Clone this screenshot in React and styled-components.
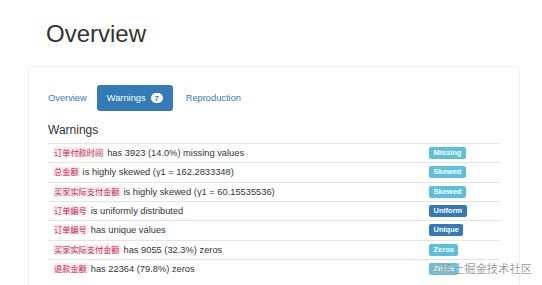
import React from "react";
import styled, { createGlobalStyle } from "styled-components";

const Global = createGlobalStyle`
  html, body { margin: 0; padding: 0; background: #fff; }
  body { font-family: "Liberation Sans", Arial, "Noto Sans CJK SC", sans-serif; color: #333; }
`;

const Page = styled.div`
  position: relative;
  width: 542px;
  height: 285px;
  overflow: hidden;
  padding: 21px 22px 0 28px;
  box-sizing: border-box;
`;

const Title = styled.h1`
  margin: 0 0 19px 18px;
  font-size: 24px;
  line-height: 26px;
  font-weight: 400;
  color: #333;
`;

const Panel = styled.div`
  border: 1px solid #efefef;
  border-radius: 4px;
  box-shadow: 0 1px 1px rgba(0, 0, 0, 0.03);
  padding: 18px 19px 20px 19px;
  height: 260px;
  box-sizing: border-box;
`;

const Tabs = styled.ul`
  display: flex;
  list-style: none;
  margin: 0 0 0 -10px;
  padding: 0;
`;

const Tab = styled.li`
  display: flex;
  align-items: center;
  height: 26px;
  padding: 0 10px;
  margin-right: ${(p) => (p.$active ? "3px" : "0")};
  border-radius: 3px;
  font-size: 9.3px;
  background: ${(p) => (p.$active ? "#337ab7" : "transparent")};
  color: ${(p) => (p.$active ? "#fff" : "#337ab7")};
`;

const Count = styled.span`
  display: inline-flex;
  align-items: center;
  justify-content: center;
  margin-left: 5px;
  width: 12px;
  height: 10px;
  border-radius: 6px;
  background: #fff;
  color: #337ab7;
  font-size: 7.5px;
  font-weight: 700;
`;

const Heading = styled.h2`
  margin: 12px 0 6px 0;
  font-size: 12px;
  line-height: 14px;
  font-weight: 400;
  color: #333;
`;

const Table = styled.table`
  width: 452px;
  border-collapse: collapse;
  font-size: 9.3px;
`;

const Cell = styled.td`
  border-top: 1px solid #e4e4e4;
  padding: 3px 5px 3.33px 5px;
  height: 12px;
  line-height: 12px;
  white-space: nowrap;
  width: ${(p) => p.$w || "auto"};
  color: #333;
`;

const Code = styled.code`
  display: inline-block;
  height: 10px;
  line-height: 10px;
  padding: 0 1px;
  margin: 0 3px 0 0;
  vertical-align: top;
  font-family: "Noto Sans CJK SC", sans-serif;
  font-size: 8.2px;
  color: #c7254e;
  background: #f9eef2;
  border-radius: 2px;
`;

const Badge = styled.span`
  display: inline-block;
  height: 12px;
  line-height: 12px;
  padding: 0 4.5px;
  vertical-align: top;
  border-radius: 2px;
  font-size: 7.5px;
  font-weight: 700;
  color: #fff;
  background: ${(p) => (p.$kind === "primary" ? "#337ab7" : "#5bc0de")};
`;

const Watermark = styled.div`
  position: absolute;
  right: 10px;
  bottom: 10px;
  font-family: "Noto Sans CJK SC", sans-serif;
  font-size: 11.3px;
  line-height: 14px;
  color: rgba(120, 120, 120, 0.75);
  text-shadow: 0 0 2px rgba(255, 255, 255, 0.9);
`;

const rows = [
  { col: "订单付款时间", text: "has 3923 (14.0%) missing values", badge: "Missing", kind: "info" },
  { col: "总金额", text: "is highly skewed (γ1 = 162.2833348)", badge: "Skewed", kind: "info" },
  { col: "买家实际支付金额", text: "is highly skewed (γ1 = 60.15535536)", badge: "Skewed", kind: "info" },
  { col: "订单编号", text: "is uniformly distributed", badge: "Uniform", kind: "primary" },
  { col: "订单编号", text: "has unique values", badge: "Unique", kind: "primary" },
  { col: "买家实际支付金额", text: "has 9055 (32.3%) zeros", badge: "Zeros", kind: "info" },
  { col: "退款金额", text: "has 22364 (79.8%) zeros", badge: "Zeros", kind: "info" },
];

export default function App() {
  return (
    <>
      <Global />
      <Page>
        <Title>Overview</Title>
        <Panel>
          <Tabs>
            <Tab>Overview</Tab>
            <Tab $active>
              Warnings <Count>7</Count>
            </Tab>
            <Tab>Reproduction</Tab>
          </Tabs>
          <Heading>Warnings</Heading>
          <Table>
            <tbody>
              {rows.map((r, i) => (
                <tr key={i}>
                  <Cell $w="366px">
                    <Code>{r.col}</Code>
                    {r.text}
                  </Cell>
                  <Cell>
                    <Badge $kind={r.kind}>{r.badge}</Badge>
                  </Cell>
                </tr>
              ))}
            </tbody>
          </Table>
        </Panel>
        <Watermark>@稀土掘金技术社区</Watermark>
      </Page>
    </>
  );
}
